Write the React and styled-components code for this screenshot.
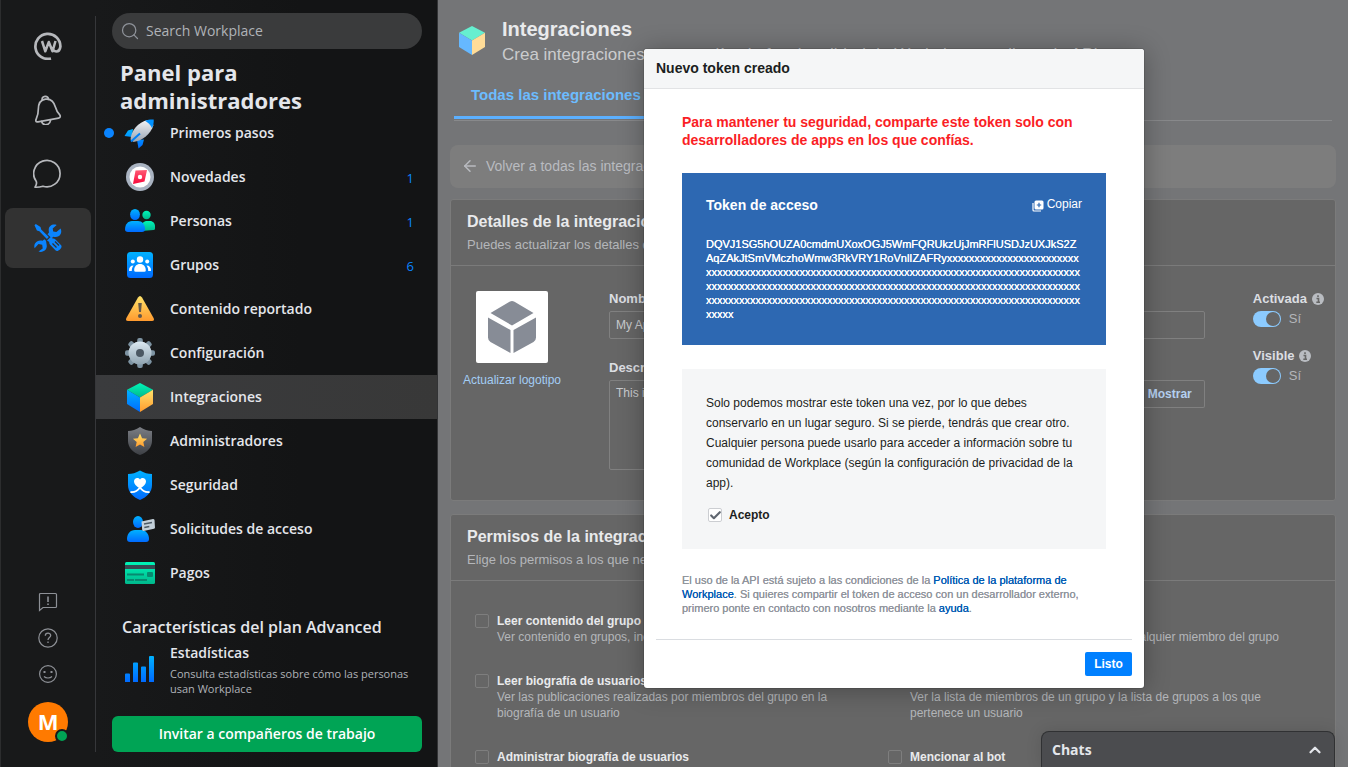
import React from 'react';
import styled, { createGlobalStyle, css } from 'styled-components';
import { ArrowLeft, Check, ChevronUp, Search } from 'lucide-react';

const ui = `"Open Sans", "Noto Sans", sans-serif`;
const sans = `"Liberation Sans", Arial, sans-serif`;

const Global = createGlobalStyle`
  *, *::before, *::after { box-sizing: border-box; }
  html, body, #root { height: 100%; }
  body { margin: 0; background: #747577; font-family: ${sans}; font-size: 12px; overflow: hidden; }
  h1, h2, h3, p, ul { margin: 0; padding: 0; }
  ul { list-style: none; }
  a { text-decoration: none; }
  button, input, textarea { font: inherit; }
  svg { flex-shrink: 0; }
`;

const Page = styled.div`
  display: grid;
  grid-template-columns: 96px 342px minmax(0, 1fr);
  height: 100vh;
`;

/* ---------- icon rail ---------- */

const Rail = styled.nav`
  display: flex;
  flex-direction: column;
  justify-content: space-between;
  padding: 16px 0 15px;
  background: #18191a;
  border-left: 1px solid #2c2d2e;
`;
const RailInner = styled.div`
  flex: 1;
  display: flex;
  flex-direction: column;
  align-items: center;
  border-right: 1px solid #36373a;
`;
const RailButton = styled.button`
  display: flex;
  align-items: center;
  justify-content: center;
  width: 86px;
  height: ${(p) => (p.$small ? 36 : 60)}px;
  margin-bottom: ${(p) => (p.$small ? 0 : 4)}px;
  padding: 0;
  border: 0;
  border-radius: 8px;
  background: ${(p) => (p.$active ? '#323232' : 'transparent')};
  color: ${(p) => (p.$active ? '#0a84ff' : p.$small ? '#8d9096' : '#b6b8bc')};
`;
const RailSpacer = styled.div`
  flex: 1;
`;
const Avatar = styled.div`
  position: relative;
  width: 40px;
  height: 40px;
  margin: 10px 0;
  border-radius: 50%;
  background: #ff7a00;
  color: #fff;
  font: 700 22px/38px ${ui};
  text-align: center;
`;
const Presence = styled.span`
  position: absolute;
  right: -1px;
  bottom: -1px;
  width: 14px;
  height: 14px;
  border: 2px solid #18191a;
  border-radius: 50%;
  background: #00a455;
`;

/* ---------- admin panel ---------- */

const Panel = styled.aside`
  display: flex;
  flex-direction: column;
  padding-bottom: 15px;
  background: linear-gradient(90deg, #18191a, #131415 60%);
  border-right: 1px solid #333436;
  color: #e4e6eb;
  font-family: ${ui};
`;
const SearchBox = styled.label`
  display: flex;
  align-items: center;
  gap: 6px;
  height: 36px;
  margin: 13px 15px 9px 16px;
  padding: 0 10px 0 8px;
  border-radius: 18px;
  background: #3a3b3c;
  color: #8f939a;
`;
const SearchInput = styled.input`
  flex: 1;
  min-width: 0;
  padding: 0;
  border: 0;
  outline: 0;
  background: none;
  color: #b0b3b8;
  font: 400 14px/20px ${ui};
  &::placeholder { color: #b0b3b8; opacity: 1; }
`;
const PanelTitle = styled.h1`
  padding: 0 24px;
  margin-bottom: -3px;
  font-size: 22px;
  line-height: 28px;
  font-weight: 700;
`;
const NavItem = styled.a`
  display: grid;
  grid-template-columns: 10px 42px 1fr auto;
  align-items: center;
  height: 44px;
  padding: 0 23px 0 8px;
  background: ${(p) => (p.$active ? 'linear-gradient(90deg, #3a3b3d, #383838)' : 'none')};
  color: #e4e6eb;
  font-size: 14px;
  font-weight: 600;
`;
const NavDot = styled.span`
  width: 10px;
  height: 10px;
  border-radius: 50%;
  background: ${(p) => (p.$on ? '#0a84ff' : 'transparent')};
`;
const NavIcon = styled.span`
  display: flex;
  padding-left: 10px;
`;
const NavLabel = styled.span`
  padding: 0 0 2px 14px;
`;
const NavCount = styled.span`
  padding-top: 2px;
  color: #0a84ff;
  font-size: 13px;
  font-weight: 400;
`;
const PlanTitle = styled.h2`
  margin: 20px 26px 4px;
  font-size: 16px;
  line-height: 24px;
  font-weight: 600;
`;
const PlanFeature = styled.div`
  display: flex;
  align-items: center;
  gap: 14px;
  padding: 0 20px 0 28px;
`;
const FeatureTitle = styled.h3`
  font-size: 14px;
  line-height: 20px;
  font-weight: 600;
`;
const FeatureText = styled.p`
  padding-top: 3px;
  color: #b0b3b8;
  font-size: 11px;
  line-height: 15px;
`;
const Invite = styled.button`
  height: 36px;
  margin: auto 15px 0 16px;
  border: 0;
  border-radius: 6px;
  background: #00a455;
  color: #fff;
  font: 600 14px/20px ${ui};
`;

/* ---------- main area ---------- */

const Main = styled.main`
  position: relative;
  min-width: 0;
  overflow: hidden;
  padding: 0 12px;
  background: #747577;
  color: #e9eaec;
`;
const PageHeader = styled.header`
  display: flex;
  gap: 14px;
  padding: 16px 6px 0;
`;
const HeaderIcon = styled.span`
  padding-top: 8px;
`;
const PageTitle = styled.h2`
  font-size: 20px;
  line-height: 26px;
`;
const PageText = styled.p`
  color: #cbccce;
  font-size: 17px;
  line-height: 26px;
  white-space: nowrap;
`;
const Tabs = styled.div`
  display: flex;
  margin: 7px 4px 0;
  padding-bottom: 1px;
  border-bottom: 1px solid #88898b;
`;
const Tab = styled.a`
  padding: 11px 18px 12px 17px;
  border-bottom: 3px solid #5cb0ff;
  color: #6cbcff;
  font-size: 15px;
  line-height: 18px;
  font-weight: 700;
`;
const Back = styled.a`
  display: flex;
  align-items: center;
  gap: 7px;
  height: 43px;
  margin: 24px 0 11px;
  padding: 0 11px 2px;
  border-radius: 8px;
  background: #7d7d7d;
  color: #b9bbc0;
  font-size: 14px;
`;
const Card = styled.section`
  margin-bottom: 13px;
  border: 1px solid #7b7b7b;
  border-radius: 3px;
  background: #666;
`;
const CardHead = styled.header`
  padding: 12px 16px 11px;
  border-bottom: 1px solid #7b7b7b;
`;
const CardTitle = styled.h3`
  font-size: 16px;
  line-height: 20px;
`;
const CardText = styled.p`
  padding-top: 4px;
  color: #b4b6ba;
  font-size: 13px;
  line-height: 18px;
`;
const Details = styled.div`
  display: grid;
  grid-template-columns: 98px minmax(0, 1fr) auto;
  gap: 48px;
  padding: 25px 11px 30px 12px;
`;
const LogoColumn = styled.div`
  display: flex;
  flex-direction: column;
  align-items: center;
  gap: 9px;
  white-space: nowrap;
`;
const LogoTile = styled.div`
  display: grid;
  place-items: center;
  width: 72px;
  height: 72px;
  border-radius: 2px;
  background: #fff;
`;
const PaleLink = styled.a`
  color: #a3cdf5;
  line-height: 16px;
`;
const Fields = styled.div`
  display: grid;
  grid-template-columns: 1fr 1fr;
  gap: 21px 16px;
`;
const Field = styled.label`
  display: flex;
  flex-direction: column;
  gap: 4px;
  color: #dcdee2;
  font-size: 13px;
  line-height: 16px;
  font-weight: 700;
`;
const fieldBox = css`
  width: 100%;
  padding: 4px 6px;
  border: 1px solid #808080;
  border-radius: 2px;
  background: transparent;
  color: #c9cbce;
  font: 400 12px/16px ${sans};
`;
const TextInput = styled.input`
  ${fieldBox}
  height: 28px;
`;
const TextArea = styled.textarea`
  ${fieldBox}
  display: block;
  height: 90px;
  resize: none;
`;
const SecretRow = styled.span`
  display: flex;
`;
const ShowButton = styled.button`
  height: 28px;
  padding: 0 12px;
  border: 1px solid #808080;
  border-left: 0;
  border-radius: 2px;
  background: transparent;
  color: #b5d0f0;
  font-size: 12px;
  font-weight: 700;
`;
const Switches = styled.div`
  display: flex;
  flex-direction: column;
  gap: 21px;
`;
const SwitchField = styled.label`
  display: grid;
  gap: 4px;
  color: #dcdee2;
  font-size: 13px;
  line-height: 16px;
  font-weight: 700;
`;
const SwitchLine = styled.span`
  display: flex;
  align-items: center;
  gap: ${(p) => p.$gap}px;
  color: ${(p) => (p.$muted ? '#b4b6ba' : 'inherit')};
  font-weight: ${(p) => (p.$muted ? 400 : 700)};
`;
const Switch = styled.input`
  appearance: none;
  display: flex;
  justify-content: flex-end;
  width: 28px;
  height: 16px;
  margin: 0;
  padding: 1px;
  border-radius: 8px;
  background: #8ccbff;
  &::before {
    content: '';
    width: 14px;
    height: 14px;
    border-radius: 50%;
    background: #666;
  }
`;
const Permissions = styled.div`
  display: grid;
  grid-template-columns: 413px minmax(0, 1fr);
  row-gap: 28px;
  padding: 32px 24px;
`;
const Permission = styled.label`
  display: grid;
  grid-template-columns: 14px minmax(0, 360px);
  justify-content: start;
  gap: 8px;
  min-width: 0;
`;
const Box = styled.input`
  appearance: none;
  width: 14px;
  height: 14px;
  margin: 1px 0;
  border: 1px solid ${(p) => (p.$light ? '#ccced2' : '#7e7e7e')};
  border-radius: 2px;
  background: ${(p) => (p.$light ? '#fff' : 'transparent')};
`;
const PermissionName = styled.strong`
  display: block;
  color: #e9eaec;
  line-height: 16px;
`;
const PermissionText = styled.span`
  display: block;
  color: #b4b6ba;
  line-height: 16px;
  ${(p) => p.$wide && css`white-space: nowrap;`}
`;

/* ---------- dialog ---------- */

const Overlay = styled.div`
  position: absolute;
  inset: 0;
  display: flex;
  justify-content: center;
  align-items: flex-start;
  padding: 49px 0 0 2px;
`;
const Dialog = styled.div`
  width: 500px;
  border-radius: 3px;
  background: #fff;
  box-shadow: 0 2px 26px rgba(0, 0, 0, 0.3), 0 0 0 1px rgba(0, 0, 0, 0.1);
  color: #1c1e21;
  overflow: hidden;
`;
const DialogTitle = styled.h2`
  height: 40px;
  padding: 0 12px;
  border-bottom: 1px solid #e2e3e5;
  background: #f5f6f7;
  font-size: 14px;
  line-height: 38px;
`;
const DialogBody = styled.div`
  display: grid;
  gap: 24px;
  padding: 24px 38px;
`;
const Warning = styled.p`
  color: #fa1e25;
  font-size: 14px;
  line-height: 18px;
  font-weight: 700;
`;
const Token = styled.section`
  padding: 24px;
  background: #2d68b2;
  color: #fff;
`;
const TokenHead = styled.div`
  display: flex;
  justify-content: space-between;
  align-items: center;
  height: 16px;
  margin-bottom: 24px;
`;
const TokenTitle = styled.h3`
  font-size: 14px;
  line-height: 16px;
`;
const Copy = styled.button`
  display: flex;
  align-items: flex-start;
  gap: 3px;
  height: 16px;
  padding: 0;
  border: 0;
  background: none;
  color: #fff;
  font-size: 12px;
  line-height: 14px;
  > svg { margin-top: 3px; }
`;
const TokenText = styled.p`
  font-size: 11px;
  line-height: 14px;
  text-shadow: 0 0 0 #fff;
  word-break: break-all;
`;
const Consent = styled.section`
  display: grid;
  gap: 12px;
  padding: 24px;
  background: #f5f6f7;
  font-size: 12px;
  line-height: 20px;
`;
const Accept = styled.label`
  display: flex;
  align-items: center;
  gap: 7px;
  padding-left: 2px;
  font-weight: 700;
`;
const CheckStack = styled.span`
  display: grid;
  place-items: center;
  > * { grid-area: 1 / 1; }
  > svg { color: #606770; pointer-events: none; }
`;
const Legal = styled.p`
  color: #90949c;
  font-size: 11px;
  line-height: 14px;
  text-shadow: 0 0 0 #90949c;
`;
const LegalLink = styled.a`
  color: #0059b3;
  text-shadow: 0 0 0 #0059b3;
`;
const DialogFoot = styled.footer`
  display: flex;
  justify-content: flex-end;
  margin: 0 12px;
  padding: 12px 0;
  border-top: 1px solid #dadde1;
`;
const Done = styled.button`
  width: 47px;
  height: 24px;
  padding: 0;
  border: 0;
  border-radius: 2px;
  background: #0080ff;
  color: #fff;
  font-size: 12px;
  font-weight: 700;
`;

const Chats = styled.button`
  position: absolute;
  right: 13px;
  bottom: 0;
  display: flex;
  justify-content: space-between;
  align-items: center;
  width: 294px;
  height: 36px;
  padding: 0 10px;
  border: 1px solid #303133;
  border-bottom: 0;
  border-radius: 8px 8px 0 0;
  background: #4b4c4f;
  box-shadow: 0 0 16px rgba(0, 0, 0, 0.12);
  color: #e4e6eb;
  font: 700 14px/20px ${ui};
`;

/* ---------- drawings ---------- */

const Svg = ({ size = 32, children, ...rest }) => (
  <svg width={size} height={size} viewBox={`0 0 ${size} ${size}`} fill="none" aria-hidden="true" {...rest}>
    {children}
  </svg>
);

const Gradients = () => (
  <svg width="0" height="0" style={{ position: 'absolute' }} aria-hidden="true">
    <defs>
      {[
        ['blue', '#00b2ff', '#006aff'],
        ['teal', '#00f5b8', '#00b88c'],
        ['gold', '#ffe36b', '#ff9a2e'],
        ['steel', '#dbe9f2', '#8fa3b0'],
        ['silver', '#f2f4f6', '#9aa4b2'],
        ['red', '#ff5b75', '#f7083b'],
        ['iron', '#7b7e84', '#3d4045'],
      ].map(([id, from, to]) => (
        <linearGradient key={id} id={id} x1="0" y1="0" x2="0" y2="1">
          <stop offset="0" stopColor={from} />
          <stop offset="1" stopColor={to} />
        </linearGradient>
      ))}
    </defs>
  </svg>
);

const LogoIcon = () => (
  <Svg size={28} stroke="currentColor" strokeWidth="2.7" strokeLinejoin="round">
    <path d="M17 26.500A12.500 12.500 0 1 1 26.400 14.500c-.4 3.200-2 5-4.200 5-1.500 0-2.700-.6-3.700-2.200" />
    <path d="M8 9l3.300 10.300L14.800 10l3.700 9.300L21.500 9" strokeWidth="2.500" />
  </Svg>
);
const BellIcon = () => (
  <Svg size={30} stroke="currentColor" strokeWidth="1.7" strokeLinejoin="round" strokeLinecap="round">
    <path d="M2.900 26.100C2.200 23.500 5.300 22.500 5.300 14.500 5.300 8.300 8.300 4.600 12.500 4.100c5.200-.6 8.700 3.100 10.100 8.400 1 4 2.400 5.500 4 7.200 1.200 1.300.8 3.200-1 3.500L5 26.800c-1 .2-1.800.1-2.100-.7z" />
    <path d="M9.200 4.800C8.800 2.800 10.200 1.400 12 1.300c1.900-.1 3.300 1 3.500 3M8.500 26.500c1 2.500 3 3.600 5 3.200 2-.3 3.600-2 4-4.400" />
  </Svg>
);
const ChatIcon = () => (
  <Svg size={30} stroke="currentColor" strokeWidth="1.700" strokeLinejoin="round">
    <path d="M2 28.200c1.400-2 1.900-3.800 1.300-5.700A13.200 13.200 0 1 1 10 27.200c-2.600.8-5.200 1.200-8 1z" />
  </Svg>
);
const ToolsIcon = () => (
  <Svg size={30}>
    <g fill="currentColor">
      <path d="M1.500 2.200 2.800 1l4.700 3 .7 2.600 7.600 7.500-1.900 1.900-7.500-7.700-2.500-.8z" />
      <path d="M14 17.500l3.700-3.600 2 1.600c.9-.2 2 .2 2.800 1l5.600 5.800c2 2.200-3.200 7.200-5.400 5.300l-5.600-5.800c-.8-.8-1-1.700-.8-2.700z" />
      <path d="M27.600 5.600l-4.200 3.500-3.200-.6-.5-3 4-3.600c-3.600-1.500-8 .4-8 4.900l.2 3-1.400 1.400 4.200 4.100 1.600-1.500c6.200 1.500 9.500-3.500 7.300-8.200zM13 17.700l-1.600-1.500-1.800 1.500C4 16.200.2 20.500 1.600 25.200L5.500 21l3.700.7.500 3.700-4.200 3.200c4.400 1.300 9-1.500 8.200-6.500z" />
    </g>
    <path d="M19.500 20.500l4 4M22 18.500l4 4" stroke="#323232" strokeWidth="1.300" />
  </Svg>
);
const FeedbackIcon = () => (
  <Svg size={20} stroke="currentColor" strokeWidth="1.200">
    <path d="M1.500 18.500v-16q0-1 1-1h15q1 0 1 1v12q0 1-1 1h-12.500z" />
    <path d="M10 4.500v5.500M10 11.500v1.500" strokeWidth="1.600" />
  </Svg>
);
const HelpIcon = () => (
  <Svg size={20} stroke="currentColor" strokeWidth="1.200">
    <circle cx="10" cy="10" r="9.200" />
    <path d="M7.300 7.800c0-3.600 5.400-3.500 5.400-.3 0 2-2.700 2.200-2.700 4.500M10 13.500v1.500" strokeWidth="1.300" />
  </Svg>
);
const SmileIcon = () => (
  <Svg size={20} stroke="currentColor" strokeWidth="1.200">
    <circle cx="10" cy="10" r="8.400" />
    <path d="M6 12.500c2 2 6 2 8 0" />
    <path d="M5.500 8h2M12.500 8h2" strokeWidth="1.800" />
  </Svg>
);

const CubeArt = ({ soft }) => (
  <Svg>
    <path d="M16 2l13 6.800L16 16.500 3 8.800z" fill={soft ? '#66efd0' : 'url(#teal)'} />
    <path d="M3 8.800l13 7.700V31L3 23z" fill={soft ? '#66b8ff' : 'url(#blue)'} />
    <path d="M29 8.800l-13 7.700V31l13-8z" fill={soft ? '#ffdc98' : 'url(#gold)'} />
  </Svg>
);
const GreyCube = () => (
  <svg width="50" height="54" viewBox="0 0 50 54" fill="#878c96" aria-hidden="true">
    <path d="M25 1q1 0 2.500.8L46.500 13 25 25.500 3.500 13 22.500 1.800Q24 1 25 1zM1 17.500L23.500 30v23L3.500 42Q1 40.500 1 37.500zM49 17.500L26.500 30v23l20-11q2.500-1.500 2.500-4.500z" />
  </svg>
);
const InfoDot = () => (
  <Svg size={12}>
    <circle cx="6" cy="6" r="6" fill="#b9bcc1" />
    <path d="M6 2.200v1.800M4.500 5.500H6.500V9.300M4.300 9.300h3.700" stroke="#666" strokeWidth="1.600" />
  </Svg>
);

const art = {
  rocket: (
    <Svg>
      <path d="M9 12L4 13.500.5 19l7.500 1zM20 22.500l-1.500 5.500-4 3.500-1.500-8.500z" fill="url(#blue)" />
      <path d="M6.500 22.500C7 14 14 5 24 3l5.500 5C27 17 18 24 9.500 25z" fill="url(#silver)" />
      <path d="M21 3.800C24 2.500 27 2.300 29.700 2.500c.2 3-.2 5.800-1.700 8.500C26.500 8 24 5.500 21 3.800z" fill="#0091ff" />
      <path d="M7 24.500L16 16.500" stroke="#0080f8" strokeWidth="2" />
    </Svg>
  ),
  compass: (
    <Svg>
      <circle cx="16" cy="16" r="14" fill="#a9b3c1" />
      <circle cx="16" cy="16" r="10.500" fill="#fff" />
      <path d="M11.500 9.500L23 9l-2.500 11.500L9 23z" fill="url(#red)" />
      <circle cx="16" cy="16" r="2.200" fill="#fff" />
    </Svg>
  ),
  people: (
    <Svg>
      <circle cx="22.500" cy="10" r="4.200" fill="url(#teal)" />
      <path d="M18 26v-5.500c0-3 2.500-4.500 5-4.500h3c3 0 5 2.500 5 5v2.500q0 1.500-1.500 1.500z" fill="url(#teal)" />
      <ellipse cx="11" cy="9.500" rx="4.900" ry="5.500" fill="url(#blue)" />
      <path d="M1 24.500c0-5 3-8.500 7-8.500h6c4 0 7 3.500 7 8 0 2-1 3-3 3H4c-2 0-3-1-3-2.500z" fill="url(#blue)" />
    </Svg>
  ),
  groups: (
    <Svg>
      <rect x="3" y="3" width="26" height="26" rx="3.500" fill="url(#blue)" />
      <g fill="#fff">
        <circle cx="16" cy="10.500" r="3.200" />
        <circle cx="8.800" cy="12.500" r="2" />
        <circle cx="23.200" cy="12.500" r="2" />
        <path d="M10.200 21.500c0-4 2.200-6.500 5.800-6.500s5.800 2.500 5.800 6.500q0 1.200-1.500 1.200h-8.600q-1.500 0-1.500-1.200zM5 21.500c0-3 1.300-5 4.500-5-1.200 1.500-1.700 3-1.700 5.500H6q-1 0-1-.5zM27 21.500c0-3-1.300-5-4.500-5 1.200 1.500 1.700 3 1.700 5.500H26q1 0 1-.5z" />
      </g>
    </Svg>
  ),
  warning: (
    <Svg>
      <path d="M14 4.500q2-3 4 0L29.600 25q1.300 3-1.600 3H4q-2.900 0-1.600-3z" fill="url(#gold)" />
      <path d="M14.200 10h3.600l-.8 9h-2z" fill="#62574a" />
      <circle cx="16" cy="23" r="2" fill="#62574a" />
    </Svg>
  ),
  gear: (
    <Svg>
      {[0, 45, 90, 135].map((a) => (
        <rect key={a} x="13.200" y="1" width="5.600" height="30" rx="2" fill="#7d93a2" transform={`rotate(${a} 16 16)`} />
      ))}
      <circle cx="16" cy="16" r="11.500" fill="url(#steel)" />
      <circle cx="16" cy="16" r="4" fill="#4b5863" />
    </Svg>
  ),
  cube: <CubeArt />,
  admin: (
    <Svg>
      <path d="M16 2c4 2.500 8 4 12 4v10c0 6.500-5 11.500-12 14C9 27.500 4 22.500 4 16V6c4 0 8-1.500 12-4z" fill="url(#iron)" />
      <path d="M16 8.500l2.100 4.700 5 .5-3.800 3.400 1.100 5L16 19.600l-4.400 2.500 1.100-5-3.800-3.400 5-.5z" fill="url(#gold)" />
    </Svg>
  ),
  security: (
    <Svg>
      <path d="M16 1.500c4 2.500 8 3.500 12 3.500v11c0 7-5 12-12 15C9 28 4 23 4 16V5c4 0 8-1 12-3.500z" fill="url(#blue)" />
      <path d="M16 19.500C12 17 10 15 10 12.500c0-3.500 4-4.500 6-2 2-2.500 6-1.500 6 2 0 2.500-2 4.500-6 7z" fill="#fff" />
      <path d="M6.500 23c4 .5 7-1 9.500-4.500 2.500 3.500 5.500 5 9.500 4.500" stroke="#fff" strokeWidth="1.800" />
    </Svg>
  ),
  access: (
    <Svg>
      <ellipse cx="14" cy="9" rx="5" ry="6" fill="url(#blue)" />
      <path d="M3 26c0-5 3-9 8-9h6c5 0 8 4 8 9q0 3-3 3H6q-3 0-3-3z" fill="url(#blue)" />
      <path d="M17.500 8.500L29 6q1.300 0 1.500 1l.5 7.500q0 1-1 1.300L19.500 18q-1 0-1.300-1z" fill="#c3d0d9" />
      <path d="M20 11l8-1.500M20.300 14.500l5-1" stroke="#4c5a65" strokeWidth="1.500" />
    </Svg>
  ),
  card: (
    <Svg>
      <rect x="1" y="5" width="30" height="22" rx="1.500" fill="url(#teal)" />
      <path d="M1 8h30v4H1z" fill="#374a52" />
      <path d="M3 17.500h17M3 23h7M11 23h12" stroke="#078a70" strokeWidth="2" />
      <rect x="23" y="15" width="6" height="5" rx="1" fill="#078a70" />
    </Svg>
  ),
};
const BarsArt = () => (
  <Svg>
    <path d="M1 20.500q0-1 1-1h3q1 0 1 1V28H1zM9 9.500q0-1 1-1h3q1 0 1 1V28H9zM17 13.500q0-1 1-1h3q1 0 1 1V28h-5zM25 3q0-1 1-1h3q1 0 1 1v25h-5z" fill="url(#blue)" />
  </Svg>
);
const CopyIcon = () => (
  <Svg size={12}>
    <path d="M1 3v7q0 1 1 1h7" stroke="#fff" strokeWidth="1.200" />
    <rect x="2.500" y="0.500" width="9" height="9" rx="1.500" fill="#fff" />
    <path d="M7 2.800v4.400M4.800 5h4.400" stroke="#2d68b2" strokeWidth="1.200" />
  </Svg>
);

/* ---------- data ---------- */

const nav = [
  { icon: 'rocket', label: 'Primeros pasos', dot: true },
  { icon: 'compass', label: 'Novedades', count: 1 },
  { icon: 'people', label: 'Personas', count: 1 },
  { icon: 'groups', label: 'Grupos', count: 6 },
  { icon: 'warning', label: 'Contenido reportado' },
  { icon: 'gear', label: 'Configuración' },
  { icon: 'cube', label: 'Integraciones', active: true },
  { icon: 'admin', label: 'Administradores' },
  { icon: 'security', label: 'Seguridad' },
  { icon: 'access', label: 'Solicitudes de acceso' },
  { icon: 'card', label: 'Pagos' },
];

const permissions = [
  ['Leer contenido del grupo', 'Ver contenido en grupos, incluidas las publicaciones'],
  ['Administrar contenido del grupo', 'Crear contenido en grupo en nombre de cualquier miembro del grupo'],
  ['Leer biografía de usuarios', 'Ver las publicaciones realizadas por miembros del grupo en la biografía de un usuario'],
  ['Leer miembros', 'Ver la lista de miembros de un grupo y la lista de grupos a los que pertenece un usuario'],
  ['Administrar biografía de usuarios'],
  ['Mencionar al bot'],
];

const token =
  'DQVJ1SG5hOUZA0cmdmUXoxOGJ5WmFQRUkzUjJmRFlUSDJzUXJkS2ZAqZAkJtSmVMczhoWmw3RkVRY1RoVnlIZAFRy' + 'x'.repeat(24 + 68 * 3 + 5);

function SwitchRow({ label }) {
  return (
    <SwitchField>
      <SwitchLine $gap={5}>
        {label}
        <InfoDot />
      </SwitchLine>
      <SwitchLine $gap={8} $muted>
        <Switch type="checkbox" role="switch" defaultChecked />
        Sí
      </SwitchLine>
    </SwitchField>
  );
}

export default function App() {
  return (
    <Page>
      <Global />
      <Gradients />
      <Rail>
        <RailInner>
          <RailButton aria-label="Inicio"><LogoIcon /></RailButton>
          <RailButton aria-label="Notificaciones"><BellIcon /></RailButton>
          <RailButton aria-label="Chat"><ChatIcon /></RailButton>
          <RailButton aria-label="Administración" $active><ToolsIcon /></RailButton>
          <RailSpacer />
          <RailButton $small aria-label="Comentarios"><FeedbackIcon /></RailButton>
          <RailButton $small aria-label="Ayuda"><HelpIcon /></RailButton>
          <RailButton $small aria-label="Estado"><SmileIcon /></RailButton>
          <Avatar>M<Presence /></Avatar>
        </RailInner>
      </Rail>

      <Panel>
        <SearchBox>
          <Search size={20} strokeWidth={1.5} />
          <SearchInput type="search" placeholder="Search Workplace" aria-label="Search Workplace" />
        </SearchBox>
        <PanelTitle>Panel para administradores</PanelTitle>
        <ul>
          {nav.map((n) => (
            <li key={n.label}>
              <NavItem href="#" $active={n.active}>
                <NavDot $on={n.dot} />
                <NavIcon>{art[n.icon]}</NavIcon>
                <NavLabel>{n.label}</NavLabel>
                {n.count && <NavCount>{n.count}</NavCount>}
              </NavItem>
            </li>
          ))}
        </ul>
        <PlanTitle>Características del plan Advanced</PlanTitle>
        <PlanFeature>
          <BarsArt />
          <div>
            <FeatureTitle>Estadísticas</FeatureTitle>
            <FeatureText>Consulta estadísticas sobre cómo las personas usan Workplace</FeatureText>
          </div>
        </PlanFeature>
        <Invite>Invitar a compañeros de trabajo</Invite>
      </Panel>

      <Main>
        <PageHeader>
          <HeaderIcon><CubeArt soft /></HeaderIcon>
          <div>
            <PageTitle>Integraciones</PageTitle>
            <PageText>Crea integraciones que amplíen la funcionalidad de Workplace mediante la API</PageText>
          </div>
        </PageHeader>
        <Tabs>
          <Tab href="#">Todas las integraciones</Tab>
        </Tabs>
        <Back href="#">
          <ArrowLeft size={18} strokeWidth={2} />
          Volver a todas las integraciones
        </Back>

        <Card>
          <CardHead>
            <CardTitle>Detalles de la integración</CardTitle>
            <CardText>Puedes actualizar los detalles de la integración.</CardText>
          </CardHead>
          <Details>
            <LogoColumn>
              <LogoTile><GreyCube /></LogoTile>
              <PaleLink href="#">Actualizar logotipo</PaleLink>
            </LogoColumn>
            <Fields>
              <Field>
                Nombre
                <TextInput defaultValue="My App" />
              </Field>
              <Field>
                Identificador
                <TextInput defaultValue="" />
              </Field>
              <Field>
                Descripción
                <TextArea defaultValue="This is my app" />
              </Field>
              <Field>
                Clave secreta
                <SecretRow>
                  <TextInput type="password" defaultValue="" />
                  <ShowButton type="button">Mostrar</ShowButton>
                </SecretRow>
              </Field>
            </Fields>
            <Switches>
              <SwitchRow label="Activada" />
              <SwitchRow label="Visible" />
            </Switches>
          </Details>
        </Card>

        <Card>
          <CardHead>
            <CardTitle>Permisos de la integración</CardTitle>
            <CardText>Elige los permisos a los que necesita acceder.</CardText>
          </CardHead>
          <Permissions>
            {permissions.map(([name, text], i) => (
              <Permission key={name}>
                <Box type="checkbox" />
                <span>
                  <PermissionName>{name}</PermissionName>
                  {text && <PermissionText $wide={i < 2}>{text}</PermissionText>}
                </span>
              </Permission>
            ))}
          </Permissions>
        </Card>

        <Overlay>
          <Dialog role="dialog" aria-labelledby="dialog-title">
            <DialogTitle id="dialog-title">Nuevo token creado</DialogTitle>
            <DialogBody>
              <Warning>
                Para mantener tu seguridad, comparte este token solo con desarrolladores de apps en los que confías.
              </Warning>
              <Token>
                <TokenHead>
                  <TokenTitle>Token de acceso</TokenTitle>
                  <Copy type="button"><CopyIcon />Copiar</Copy>
                </TokenHead>
                <TokenText>{token}</TokenText>
              </Token>
              <Consent>
                <p>
                  Solo podemos mostrar este token una vez, por lo que debes conservarlo en un lugar seguro. Si se
                  pierde, tendrás que crear otro. Cualquier persona puede usarlo para acceder a información sobre tu
                  comunidad de Workplace (según la configuración de privacidad de la app).
                </p>
                <Accept>
                  <CheckStack>
                    <Box $light type="checkbox" defaultChecked />
                    <Check size={13} strokeWidth={4} />
                  </CheckStack>
                  Acepto
                </Accept>
              </Consent>
              <Legal>
                El uso de la API está sujeto a las condiciones de la{' '}
                <LegalLink href="#">Política de la plataforma de Workplace</LegalLink>. Si quieres compartir el token
                de acceso con un desarrollador externo, primero ponte en contacto con nosotros mediante la{' '}
                <LegalLink href="#">ayuda</LegalLink>.
              </Legal>
            </DialogBody>
            <DialogFoot>
              <Done type="button">Listo</Done>
            </DialogFoot>
          </Dialog>
        </Overlay>

        <Chats type="button">
          Chats
          <ChevronUp size={18} strokeWidth={3} />
        </Chats>
      </Main>
    </Page>
  );
}
